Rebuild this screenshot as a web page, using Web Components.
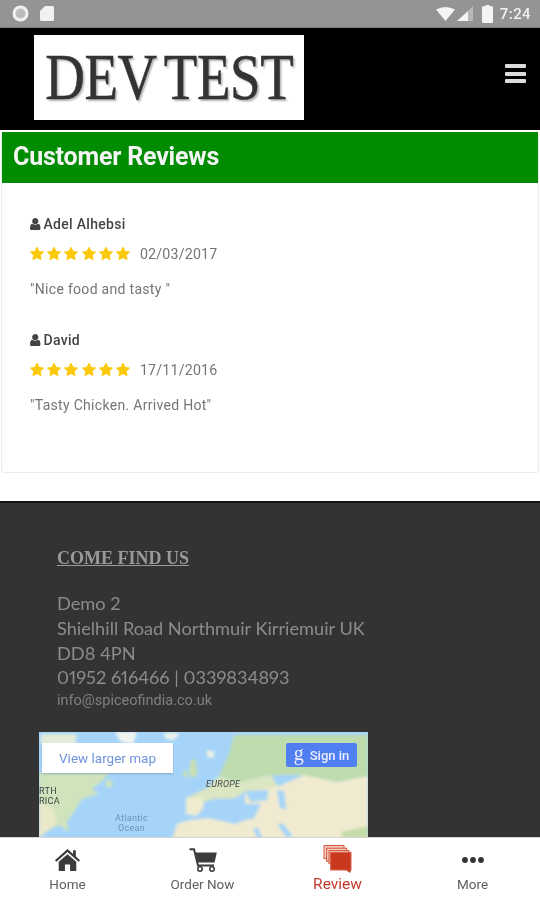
<!DOCTYPE html>
<html>
<head>
<meta charset="utf-8">
<title>Customer Reviews</title>
<style>
    html, body {
        margin: 0;
        height: 100%;
        background: #fff;
    }
</style>
</head>
<body>
<app-shell>
    <status-bar></status-bar>
    <app-header></app-header>
    <reviews-panel heading="Customer Reviews">
        <review-item name="Adel Alhebsi" date="02/03/2017" text="&quot;Nice food and tasty &quot;"></review-item>
        <review-item name="David" date="17/11/2016" text="&quot;Tasty Chicken. Arrived Hot&quot;"></review-item>
    </reviews-panel>
    <site-footer>
        <map-embed></map-embed>
    </site-footer>
    <tab-bar slot="tabs">
        <tab-item label="Home" icon="home"></tab-item>
        <tab-item label="Order Now" icon="cart"></tab-item>
        <tab-item label="Review" icon="review" active></tab-item>
        <tab-item label="More" icon="more"></tab-item>
    </tab-bar>
</app-shell>

<script>
const ICONS = {
    star: '<svg viewBox="0 0 1664 1664" width="14" height="14"><path fill="#fcc80a" transform="translate(-64 -64)" d="M1728 647q0 22-26 48l-363 354 86 500q1 7 1 20 0 21-10.5 35.5t-30.5 14.5q-19 0-40-12l-449-236-449 236q-22 12-40 12-21 0-31.5-14.5t-10.5-35.5q0-6 2-20l86-500-364-354q-25-27-25-48 0-37 56-46l502-73 225-455q19-41 49-41t49 41l225 455 502 73q56 9 56 46z"/></svg>',
    user: '<svg viewBox="256 128 1280 1536" width="10.5" height="12.5"><path fill="#444" d="M1536 1399q0 109-62.5 187t-150.5 78h-854q-88 0-150.5-78t-62.5-187q0-85 8.5-160.5t31.5-152 58.5-131 94-89 134.5-34.5q131 128 313 128t313-128q76 0 134.5 34.5t94 89 58.5 131 31.5 152 8.5 160.5zm-256-887q0 159-112.5 271.5t-271.5 112.5-271.5-112.5-112.5-271.5 112.5-271.5 271.5-112.5 271.5 112.5 112.5 271.5z"/></svg>',
    home: '<svg viewBox="0 0 28 26" width="27" height="24"><path fill="#3c3c3c" d="M14 1 L20 6.4 V2.5 H23 V9 L27.6 13.2 L26 15 L14 4.4 L2 15 L0.4 13.2 Z M4.5 15 L14 6.8 L23.5 15 V25 H16.8 V18 H11.2 V25 H4.5 Z"/></svg>',
    cart: '<svg viewBox="0 0 28 24" width="28" height="24"><path fill="none" stroke="#3c3c3c" stroke-width="2" d="M0.5 1.2 H5 L9 17.5 H25"/><path fill="#3c3c3c" d="M6.5 4.5 H27.8 L25.6 14.5 H8.8 Z"/><circle cx="11" cy="21" r="2.2" fill="none" stroke="#3c3c3c" stroke-width="1.6"/><circle cx="23" cy="21" r="2.2" fill="none" stroke="#3c3c3c" stroke-width="1.6"/></svg>',
    review: '<svg viewBox="0 1 30 30" width="30" height="30"><g fill="#f6cdc2" stroke="#d4553a" stroke-width="1"><rect x="1" y="1.6" width="20" height="13"/><rect x="3.6" y="4.2" width="20" height="13"/><rect x="6" y="6.6" width="20" height="13"/></g><rect x="7.6" y="8.4" width="20.4" height="17.6" fill="#c9391d" stroke="#d9604a"/><path fill="#c9391d" d="M23 26 H28 L27 29 Z"/></svg>',
    more: '<svg viewBox="0 0 22 6" width="22" height="6"><circle cx="3" cy="3" r="2.9" fill="#333"/><circle cx="11" cy="3" r="2.9" fill="#333"/><circle cx="19" cy="3" r="2.9" fill="#333"/></svg>'
};

// small helper so each element only has to hand over its markup
function shadow(el, html) {
    const template = document.createElement('template');
    template.innerHTML = html;
    el.attachShadow({mode: 'open'});
    el.shadowRoot.appendChild(template.content.cloneNode(true));
}

class AppShell extends HTMLElement {
    constructor() {
        super();
        shadow(this, `
<style>
    :host {
        display: flex;
        flex-direction: column;
        height: 900px;
        width: 540px;
        overflow: hidden;
        background: #fff;
        /* the reference is a soft, upscaled capture */
        filter: blur(.35px);
    }
    .page {
        flex: 1;
        min-height: 0;
        overflow: hidden;
    }
</style>
<div class="page"><slot></slot></div>
<slot name="tabs"></slot>`);
    }
}

class StatusBar extends HTMLElement {
    constructor() {
        super();
        shadow(this, `
<style>
    :host {
        display: flex;
        align-items: center;
        justify-content: space-between;
        height: 27px;
        padding: 0 0 0 12px;
        background: #949494;
        border-bottom: 1px solid #7c7c7c;
        font: 500 15px Roboto, sans-serif;
        color: #f1f1f1;
    }
    .side {
        display: flex;
        align-items: center;
    }
    .left { gap: 11px; }
    .right { padding-right: 9px; }
    svg { display: block; }
    .time { margin-left: 7px; letter-spacing: .4px; }
</style>
<div class="side left">
    <svg width="17" height="17" viewBox="0 0 17 17"><circle cx="8.5" cy="8.5" r="6.5" fill="#bcbcbc" stroke="#f1f1f1" stroke-width="3"/></svg>
    <svg width="14" height="15" viewBox="0 0 14 15"><path fill="#f1f1f1" d="M5 0 H12.5 Q14 0 14 1.5 V13.5 Q14 15 12.5 15 H1.5 Q0 15 0 13.5 V5 Z"/></svg>
</div>
<div class="side right">
    <svg width="19" height="14" viewBox="0 0 19 14"><path fill="#f4f4f4" d="M0 2.6 Q9.5 -2.6 19 2.6 L9.5 14 Z"/></svg>
    <svg width="16" height="15" viewBox="0 0 16 15" style="margin-left:2px"><path fill="#b8b8b8" d="M16 0 V15 H0 Z"/><path fill="#f4f4f4" d="M11 5.2 V15 H0 Z"/></svg>
    <svg width="11" height="18" viewBox="0 0 11 18" style="margin-left:9px"><path fill="#f4f4f4" d="M3.5 0 H7.5 V1.2 H10 Q11 1.2 11 2.2 V17 Q11 18 10 18 H1 Q0 18 0 17 V2.2 Q0 1.2 1 1.2 H3.5 Z"/></svg>
    <span class="time">7:24</span>
</div>`);
    }
}

class AppHeader extends HTMLElement {
    constructor() {
        super();
        shadow(this, `
<style>
    :host {
        display: flex;
        align-items: flex-start;
        justify-content: space-between;
        height: 102px;
        padding: 7px 14px 0 34px;
        box-sizing: border-box;
        background: #000;
    }
    .logo {
        display: flex;
        align-items: center;
        justify-content: center;
        box-sizing: border-box;
        width: 270px;
        height: 85px;
        background: #fff;
        overflow: hidden;
    }
    .logo span {
        display: block;
        margin-top: -2px;
        font: 62px/1 "Liberation Serif", serif;
        color: #333;
        -webkit-text-stroke: .5px #333;
        text-shadow: 2px 2px 2px #b4b4b4;
        white-space: nowrap;
        letter-spacing: -0.4px;
        word-spacing: -5px;
        transform: scale(.885, 1.06);
    }
    .menu {
        display: flex;
        flex-direction: column;
        gap: 3.5px;
        margin-top: 29px;
    }
    .menu i {
        display: block;
        width: 21px;
        height: 4px;
        border-radius: 1px;
        background: #dcdcdc;
    }
</style>
<div class="logo"><span>DEV TEST</span></div>
<div class="menu"><i></i><i></i><i></i></div>`);
    }
}

class ReviewsPanel extends HTMLElement {
    constructor() {
        super();
        shadow(this, `
<style>
    :host {
        display: block;
        margin: 2px 1px 0;
        height: 341px;
        box-sizing: border-box;
        border: 1px solid #ececec;
        border-top: 0;
        border-radius: 3px;
        background: #fff;
    }
    h2 {
        margin: 0;
        height: 51px;
        padding: 0 0 0 11px;
        background: #008c00;
        color: #f4f4f4;
        font: 700 25px/49px Roboto, sans-serif;
        letter-spacing: -0.2px;
    }
    .list {
        display: flex;
        flex-direction: column;
        gap: 33px;
        padding: 32px 28px 0;
    }
</style>
<h2></h2>
<div class="list"><slot></slot></div>`);
        this.shadowRoot.querySelector('h2').textContent = this.getAttribute('heading');
    }
}

class ReviewItem extends HTMLElement {
    connectedCallback() {
        if (this.shadowRoot) return;
        const stars = ICONS.star.repeat(6);
        shadow(this, `
<style>
    :host {
        display: block;
        font-family: Roboto, sans-serif;
    }
    .name {
        display: flex;
        align-items: center;
        gap: 3px;
        height: 18px;
        font-size: 14px;
        font-weight: 500;
        letter-spacing: .3px;
        color: #444;
    }
    .rating {
        display: flex;
        align-items: center;
        height: 18px;
        margin-top: 12px;
    }
    .stars {
        display: flex;
        gap: 3.2px;
        margin-right: 10px;
    }
    .date {
        font-size: 14.2px;
        color: #757575;
        letter-spacing: .2px;
    }
    .text {
        height: 18px;
        margin-top: 17px;
        font-size: 14px;
        line-height: 18px;
        color: #757575;
        letter-spacing: .3px;
    }
    svg { display: block; }
</style>
<div class="name">${ICONS.user}<span class="who"></span></div>
<div class="rating"><div class="stars">${stars}</div><span class="date"></span></div>
<div class="text"></div>`);
        this.shadowRoot.querySelector('.who').textContent = this.getAttribute('name');
        this.shadowRoot.querySelector('.date').textContent = this.getAttribute('date');
        this.shadowRoot.querySelector('.text').textContent = this.getAttribute('text');
    }
}

class SiteFooter extends HTMLElement {
    constructor() {
        super();
        shadow(this, `
<style>
    :host {
        display: block;
        margin-top: 28px;
        height: 340px;
        padding: 43px 0 0 57px;
        box-sizing: border-box;
        background: #333;
        border-top: 2px solid #111;
        color: #8c8c8c;
    }
    h3 {
        margin: 0 0 21px;
        font: 700 18px/24px "Liberation Serif", serif;
        text-decoration: underline;
        color: #9a9a9a;
    }
    .addr {
        font: 18.2px/24.8px Lato, sans-serif;
        font-variant-numeric: proportional-nums;
    }
    .mail {
        font: 14.5px/18px Roboto, sans-serif;
        margin-top: 2px;
        color: #808080;
    }
    .map {
        margin: 22px 0 0 -18px;
    }
</style>
<h3>COME FIND US</h3>
<div class="addr">Demo 2<br>Shielhill Road Northmuir Kirriemuir UK<br>DD8 4PN<br>01952 616466 | 0339834893</div>
<div class="mail">info@spiceofindia.co.uk</div>
<div class="map"><slot></slot></div>`);
    }
}

class MapEmbed extends HTMLElement {
    constructor() {
        super();
        shadow(this, `
<style>
    :host {
        display: block;
        position: relative;
        width: 329px;
        height: 110px;
        overflow: hidden;
        font-family: Roboto, sans-serif;
        background: #a6d4f9;
    }
    svg.land { display: block; filter: blur(1.4px); }
    .larger {
        position: absolute;
        left: 3px;
        top: 11px;
        width: 131px;
        height: 30px;
        box-sizing: border-box;
        padding-left: 17px;
        background: #fff;
        color: #6f93dc;
        font-size: 13.5px;
        line-height: 30px;
        box-shadow: 0 1px 2px rgba(0,0,0,.2);
    }
    .signin {
        position: absolute;
        left: 247px;
        top: 11px;
        width: 71px;
        height: 24px;
        display: flex;
        align-items: center;
        justify-content: center;
        gap: 6px;
        border-radius: 2px;
        background: #4f7ff0;
        color: #eef;
        font-size: 13px;
        font-weight: 500;
    }
    .signin b { font: 400 20px/20px "Liberation Serif", serif; margin-top: -5px; }
    .lbl {
        position: absolute;
        font-size: 9px;
        line-height: 10px;
        letter-spacing: .3px;
        text-align: center;
    }
</style>
<svg class="land" width="329" height="110" viewBox="0 0 329 110">
    <rect width="329" height="110" fill="#a6d4f9"/>
    <!-- far north -->
    <path fill="#e2ecd8" d="M2 2 H38 L36 14 L10 16 L2 12 Z"/>
    <path fill="#f2f5ee" d="M76 0 H98 L94 12 L82 10 Z"/>
    <path fill="#eef3ea" d="M125 1 H141 L135 8 L127 7 Z"/>
    <!-- north america -->
    <path fill="#cfe3bd" d="M0 41 H70 L62 50 L53 57 L60 62 L43 67 L35 80 L28 90 L30 100 L20 93 L7 100 L0 106 Z"/>
    <path fill="#e9e8c8" d="M0 70 L14 76 L18 92 L7 100 L0 106 Z"/>
    <path fill="#cfe3bd" d="M68 47 L74 50 L72 56 L66 54 Z"/>
    <!-- ireland, uk -->
    <path fill="#c8dfb0" d="M153 26 L157 29 L158 43 L152 46 L150 38 Z"/>
    <path fill="#c8dfb0" d="M145 38 L149 40 L148 45 L144 45 Z"/>
    <!-- russia and the north -->
    <path fill="#bedcae" d="M195 3 H329 V44 L298 50 L265 43 L232 43 L208 48 L196 50 L180 44 L190 22 Z"/>
    <path fill="#eef2e4" d="M168 18 L176 20 L174 26 L168 25 Z"/>
    <!-- central europe -->
    <path fill="#dbe6c2" d="M147 66 L168 56 L180 44 L196 50 L208 48 L232 43 L240 56 L206 60 L196 66 L170 68 L162 76 L147 80 Z"/>
    <!-- central asia, africa, arabia -->
    <path fill="#f0ebd0" d="M206 60 L240 54 L265 43 L298 50 L329 44 V110 H132 L138 92 L150 88 L170 86 L196 92 L216 84 L222 72 L206 72 Z"/>
    <path fill="#f0ebd0" d="M147 66 L164 66 L165 76 L157 84 L147 82 Z"/>
    <!-- seas -->
    <path fill="#a6d4f9" d="M206 59 L229 58 L228 68 L212 70 Z"/>
    <path fill="#a6d4f9" d="M238 58 L245 59 L247 77 L241 76 Z"/>
    <path fill="#a6d4f9" d="M165 70 L180 66 L190 76 L214 76 L216 86 L196 90 L172 84 L164 80 Z"/>
    <path fill="#a6d4f9" d="M214 96 L219 96 L225 110 L220 110 Z"/>
    <path fill="#a6d4f9" d="M238 92 L244 92 L254 104 L248 106 Z"/>
    <path fill="#c6dca8" d="M302 100 L329 94 V110 H306 Z"/>
</svg>
<div class="larger">View larger map</div>
<div class="signin"><b>g</b><span>Sign in</span></div>
<div class="lbl" style="left:167px;top:47px;font-style:italic;color:#444;">EUROPE</div>
<div class="lbl" style="left:0;top:54px;color:#444;text-align:left;">RTH<br>RICA</div>
<div class="lbl" style="left:76px;top:81px;color:#6a94b8;">Atlantic<br>Ocean</div>`);
    }
}

class TabBar extends HTMLElement {
    constructor() {
        super();
        shadow(this, `
<style>
    :host {
        display: flex;
        flex: none;
        height: 62px;
        background: #fff;
        border-top: 1px solid #d4d4d4;
    }
    ::slotted(tab-item) { flex: 1; }
</style>
<slot></slot>`);
    }
}

class TabItem extends HTMLElement {
    connectedCallback() {
        if (this.shadowRoot) return;
        shadow(this, `
<style>
    :host {
        display: flex;
        flex-direction: column;
        align-items: center;
        font: 13.5px Roboto, sans-serif;
        color: #606060;
    }
    :host([active]) {
        color: #c0392b;
        font-size: 15.5px;
    }
    .icon {
        display: flex;
        align-items: center;
        justify-content: center;
        height: 34px;
        margin-top: 5px;
    }
    svg { display: block; }
    .label { margin-top: -1px; line-height: 16px; }
</style>
<div class="icon">${ICONS[this.getAttribute('icon')]}</div>
<div class="label"></div>`);
        this.shadowRoot.querySelector('.label').textContent = this.getAttribute('label');
    }
}

customElements.define('app-shell', AppShell);
customElements.define('status-bar', StatusBar);
customElements.define('app-header', AppHeader);
customElements.define('reviews-panel', ReviewsPanel);
customElements.define('review-item', ReviewItem);
customElements.define('site-footer', SiteFooter);
customElements.define('map-embed', MapEmbed);
customElements.define('tab-bar', TabBar);
customElements.define('tab-item', TabItem);
</script>
</body>
</html>
